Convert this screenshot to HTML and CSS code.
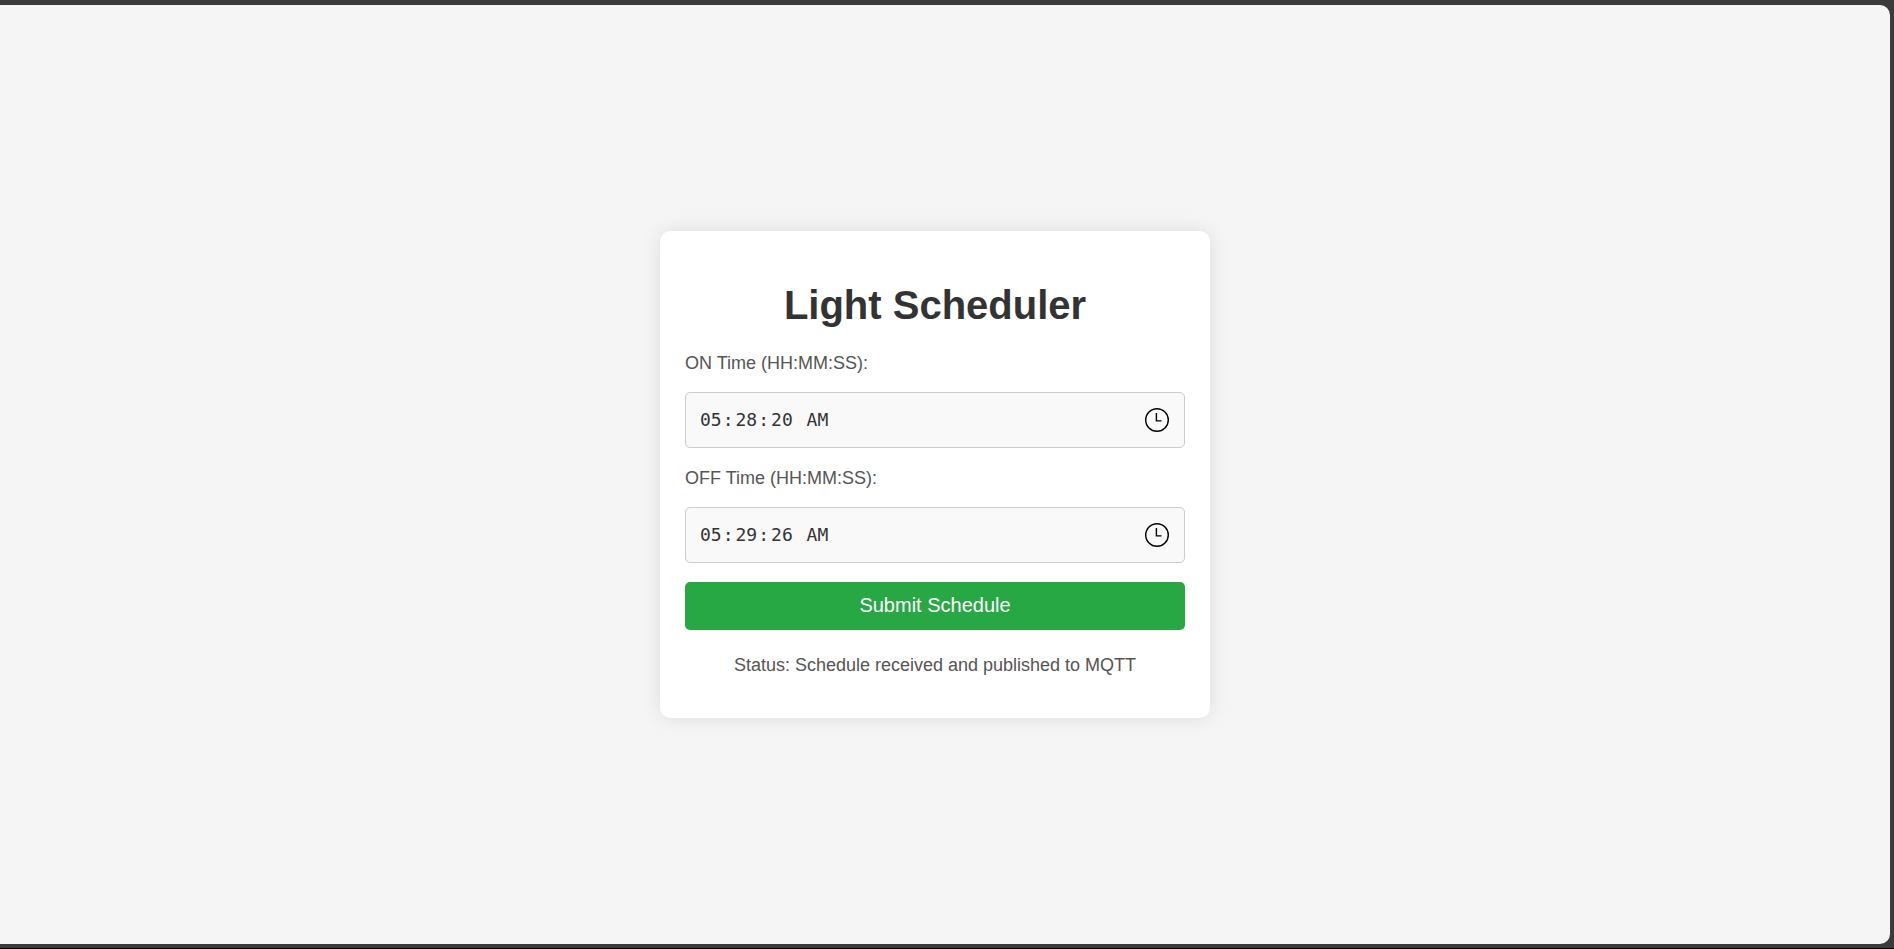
FILE: index.html
```html
<!DOCTYPE html>
<html lang="en-US">
<head>
<meta charset="utf-8">
<meta name="viewport" content="width=device-width, initial-scale=1">
<title>Light Scheduler</title>
<link rel="stylesheet" href="styles.css">
</head>
<body class="frame">
<main class="page">
  <section class="card">
    <h1 class="title">Light Scheduler</h1>
    <form class="form">
      <label class="label" for="on-time">ON Time (HH:MM:SS):</label>
      <div class="field">
        <input class="time" type="time" id="on-time" step="1" value="05:28:20">
        <svg class="clock" viewBox="0 0 24 24" aria-hidden="true"><circle cx="12" cy="12" r="11.3"/><path d="M11.4 5v7.9H16.5"/></svg>
      </div>
      <label class="label" for="off-time">OFF Time (HH:MM:SS):</label>
      <div class="field">
        <input class="time" type="time" id="off-time" step="1" value="05:29:26">
        <svg class="clock" viewBox="0 0 24 24" aria-hidden="true"><circle cx="12" cy="12" r="11.3"/><path d="M11.4 5v7.9H16.5"/></svg>
      </div>
      <button class="submit" type="button">Submit Schedule</button>
    </form>
    <p class="status">Status: Schedule received and published to MQTT</p>
  </section>
</main>
</body>
</html>
```
FILE: styles.css
```css
* {
  box-sizing: border-box;
}

.frame {
  display: flex;
  min-height: 100vh;
  margin: 0;
  padding: 5px 4px 4px 0;
  border-bottom: 1px solid #000;
  background: #3b3b3b;
  font-family: "Liberation Sans", Arial, sans-serif;
}

.page {
  display: flex;
  flex: 1;
  align-items: center;
  justify-content: center;
  padding-right: 20px;
  border-radius: 0 10px 10px 0;
  background: #f5f5f5;
}

.card {
  width: 100%;
  max-width: 550px;
  padding: 51px 25px 42px;
  border-radius: 10px;
  background: #fff;
  box-shadow: 0 0 19px rgba(0, 0, 0, 0.1);
  text-align: center;
}

.title {
  margin: 0 0 24px;
  color: #333;
  font-size: 40px;
  line-height: 46px;
}

.form {
  display: flex;
  flex-direction: column;
  text-align: left;
}

.label {
  margin-bottom: 18px;
  color: #555;
  font-size: 18px;
  line-height: 22px;
}

.field {
  position: relative;
  margin-bottom: 19px;
}

.time {
  display: block;
  width: 100%;
  height: 56px;
  padding: 0 13px;
  border: 1px solid #ccc;
  border-radius: 5px;
  background: #f9f9f9;
  color: #333;
  font-family: "DejaVu Sans Mono", monospace;
  font-size: 18px;
}

.time::-webkit-datetime-edit-minute-field,
.time::-webkit-datetime-edit-second-field,
.time::-webkit-datetime-edit-ampm-field {
  padding-left: 2px;
}

.time::-webkit-calendar-picker-indicator {
  opacity: 0;
}

.clock {
  position: absolute;
  top: 16px;
  right: 16px;
  width: 24px;
  height: 24px;
  fill: none;
  stroke: #000;
  stroke-width: 1.4;
  pointer-events: none;
}

.submit {
  height: 48px;
  padding: 0 0 2px;
  border: 0;
  border-radius: 5px;
  background: #28a745;
  color: #fff;
  font-family: inherit;
  font-size: 20px;
}

.status {
  margin: 24px 0 0;
  color: #555;
  font-size: 18px;
  line-height: 22px;
}
```
